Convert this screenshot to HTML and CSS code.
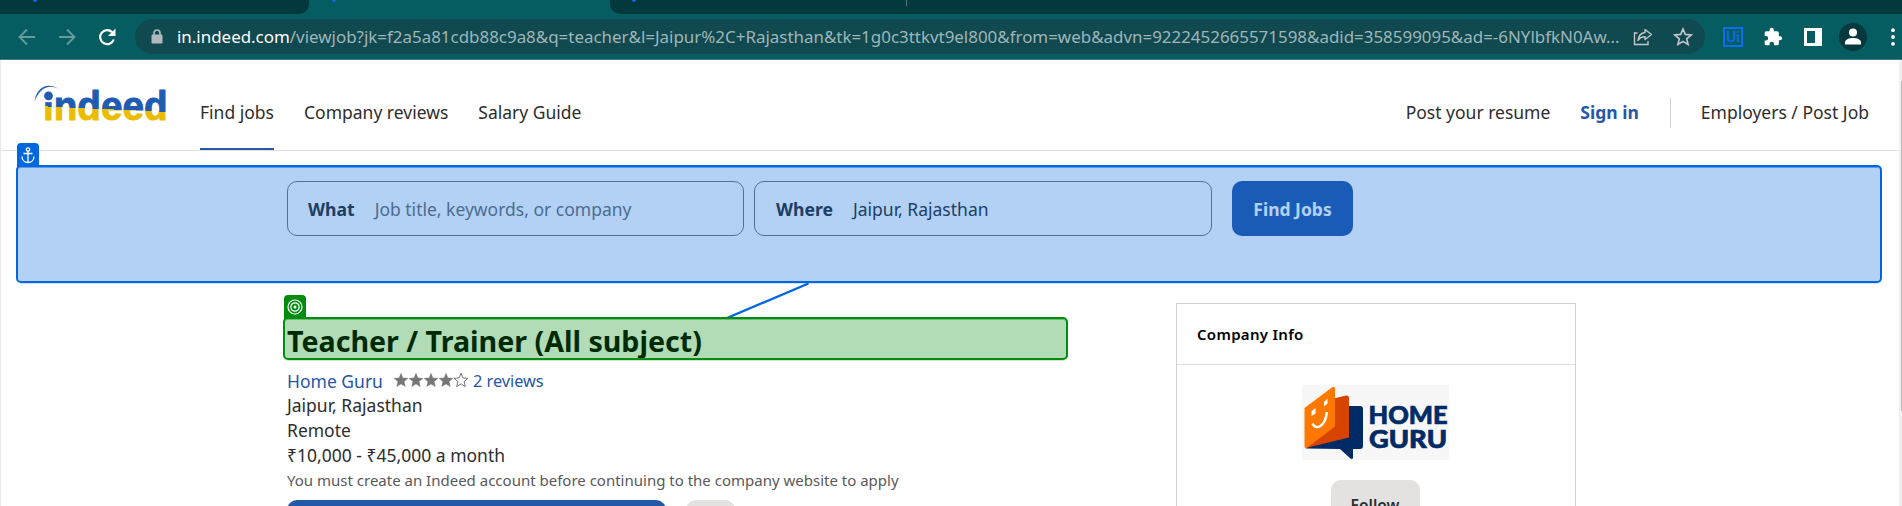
FILE: index.html
```html
<!DOCTYPE html>
<html lang="en">
<head>
<meta charset="utf-8">
<title>Teacher / Trainer (All subject)</title>
<link rel="stylesheet" href="styles.css">
</head>
<body>
<div class="chrome">
  <div class="tabstrip">
    <div class="tab tab-left"><i class="speck"></i></div>
    <div class="tab-active"><i class="speck"></i></div>
    <div class="tab tab-rest"><i class="speck"></i><i class="tab-sep"></i></div>
  </div>
  <div class="toolbar">
    <svg class="nav-ico" width="18" height="18" viewBox="0 0 18 18"><path d="M17 9H2M9 1.500L1.500 9L9 16.500" fill="none" stroke="#679b9e" stroke-width="1.800"/></svg>
    <svg class="nav-ico" width="18" height="18" viewBox="0 0 18 18"><path d="M1 9h15M9 1.500L16.500 9L9 16.500" fill="none" stroke="#679b9e" stroke-width="1.800"/></svg>
    <svg class="nav-ico" width="18" height="18" viewBox="0 0 18 18"><path d="M15.800 11.500A7 7 0 1 1 14.200 4.200" fill="none" stroke="#fff" stroke-width="2.200"/><path d="M17.500 0.500V8H10z" fill="#fff"/></svg>
    <div class="omnibox">
      <svg class="lock" width="12" height="15" viewBox="0 0 12 15"><path d="M3 6V4a3 3 0 0 1 6 0v2" fill="none" stroke="#b1b9bd" stroke-width="1.700"/><rect x="0.500" y="5.500" width="11" height="9" rx="1.200" fill="#b1b9bd"/></svg>
      <div class="url"><span class="host">in.indeed.com</span><span class="path">/viewjob?jk=f2a5a81cdb88c9a8&amp;q=teacher&amp;l=Jaipur%2C+Rajasthan&amp;tk=1g0c3ttkvt9el800&amp;from=web&amp;advn=9222452665571598&amp;adid=358599095&amp;ad=-6NYlbfkN0Aw...</span></div>
      <svg class="share" width="20" height="18" viewBox="0 0 20 18"><path d="M4.500 5H1.500V16.500H15V13" fill="none" stroke="#c1c7c9" stroke-width="1.400"/><path d="M12 1.500L18.500 6.500L12 11.500V8.700C8.500 8.700 6.500 10 5 12.500C5.500 8 8 5 12 4.500z" fill="none" stroke="#c1c7c9" stroke-width="1.400" stroke-linejoin="round"/></svg>
      <svg class="star" width="20" height="19" viewBox="0 0 20 19"><path d="M10 2l2.300 5.400 5.900.5-4.500 3.900 1.400 5.700L10 14.400l-5.100 3.100 1.400-5.700L1.800 7.900l5.900-.5z" fill="none" stroke="#c1c7c9" stroke-width="1.600"/></svg>
    </div>
    <div class="ext-ui">Ui</div>
    <svg class="puzzle" width="20" height="20" viewBox="0 0 24 24"><path fill="#fff" d="M20.500 11H19V7c0-1.100-.9-2-2-2h-4V3.500a2.500 2.500 0 0 0-5 0V5H4c-1.100 0-2 .9-2 2v3.800h1.500a2.700 2.700 0 0 1 0 5.400H2V20c0 1.100.9 2 2 2h3.800v-1.500a2.700 2.700 0 0 1 5.400 0V22H17c1.100 0 2-.9 2-2v-4h1.500a2.500 2.500 0 0 0 0-5z"/></svg>
    <div class="panel"></div>
    <svg class="avatar" width="28" height="28" viewBox="0 0 28 28"><circle cx="14" cy="14" r="14" fill="#05393d"/><circle cx="14" cy="9.500" r="4" fill="#fff"/><path d="M6 21.500v-2.300c0-2.700 4.500-4.200 8-4.200s8 1.500 8 4.200v2.300z" fill="#fff"/></svg>
    <svg class="dots" width="4" height="18" viewBox="0 0 4 18"><circle cx="2" cy="2.200" r="1.900" fill="#fff"/><circle cx="2" cy="9" r="1.900" fill="#fff"/><circle cx="2" cy="15.800" r="1.900" fill="#fff"/></svg>
  </div>
</div>

<div class="page">
  <header class="site-header">
    <svg class="logo" width="136" height="44" viewBox="32 82 136 44">
      <defs><linearGradient id="flag" gradientUnits="userSpaceOnUse" x1="104" y1="98" x2="103" y2="120"><stop offset=".5" stop-color="#205bb2"/><stop offset=".5" stop-color="#eabc04"/></linearGradient></defs>
      <text class="logo-text" x="43" y="119.800" textLength="124.500" lengthAdjust="spacingAndGlyphs" fill="url(#flag)" stroke="url(#flag)">indeed</text>
      <path d="M42 86H55V101.500Q49 103 42 101.500z" fill="#fff"/>
      <circle cx="48.500" cy="95.800" r="4.400" fill="#205bb2"/>
      <path d="M34.500 101.500C36 90 45 80.500 59 89C48 83.500 40 88 34.500 101.500z" fill="#205bb2"/>
    </svg>
    <nav class="main-nav">
      <a class="active">Find jobs</a><a>Company reviews</a><a>Salary Guide</a>
    </nav>
    <nav class="side-nav"><a>Post your resume</a><a class="signin">Sign in</a><span class="rule"></span><a>Employers / Post Job</a></nav>
  </header>

  <section class="search">
    <div class="field"><b>What</b><span class="hint">Job title, keywords, or company</span></div>
    <div class="field where"><b>Where</b><span>Jaipur, Rajasthan</span></div>
    <div class="find">Find Jobs</div>
    <div class="mark mark-blue"><div class="flag">
      <svg width="14" height="17" viewBox="0 0 14 17"><g fill="none" stroke="#fff" stroke-width="1.300"><circle cx="7" cy="2.500" r="1.700"/><path d="M7 4.200V15.500M2.500 6.500h9M1 9.500C1 13 3.500 15.500 7 15.500S13 13 13 9.500"/></g></svg>
    </div></div>
    <svg class="link-line" width="84" height="36" viewBox="0 0 84 36"><path d="M81.500 0.500L0 35" stroke="#0067df" stroke-width="2.300"/></svg>
  </section>

  <main class="content">
    <article class="job">
      <h1>Teacher / Trainer (All subject)</h1>
      <div class="mark mark-green"><div class="flag">
        <svg width="16" height="16" viewBox="0 0 16 16"><g fill="none" stroke="#fff" stroke-width="1.200"><circle cx="8" cy="8" r="7"/><circle cx="8" cy="8" r="4.200"/></g><circle cx="8" cy="8" r="1.500" fill="#fff"/></svg>
      </div></div>
      <div class="line company"><a>Home Guru</a>
        <svg class="stars" width="75" height="15" viewBox="0 0 75 15"><defs><path id="s" d="M7 .2l1.900 4.700 5.100.4-3.900 3.300 1.200 5L7 10.900l-4.300 2.700 1.200-5L0 5.300l5.100-.4z"/></defs><g fill="#767676" stroke="#767676" stroke-width=".4"><use href="#s"/><use href="#s" x="15"/><use href="#s" x="30"/><use href="#s" x="45"/></g><use href="#s" x="60" fill="none" stroke="#767676"/></svg>
        <a class="reviews">2 reviews</a></div>
      <div class="line">Jaipur, Rajasthan</div>
      <div class="line">Remote</div>
      <div class="line salary">₹10,000 - ₹45,000 a month</div>
      <div class="line note">You must create an Indeed account before continuing to the company website to apply</div>
      <div class="actions"><div class="apply"></div><div class="save"></div></div>
    </article>
    <aside class="card">
      <h2>Company Info</h2>
      <div class="card-body">
        <svg class="guru" width="147" height="75" viewBox="0 0 147 75">
          <rect width="147" height="75" fill="#f7f7f7"/>
          <path d="M4 63.500L46 21H58Q61 21 61 24V61Q61 64 58 64H51V73.500L49 74L38 64z" fill="#002b66"/>
          <path d="M4 63L32 13.500L44 10.500Q47 10 47 13V52.500z" fill="#d64400"/>
          <path d="M2.500 23L30.500 2Q33 1 33 4V41.500L4 63.500Q2.500 63.500 2.500 61z" fill="#ff7900"/>
          <path d="M9.500 26L13.500 23V28.500L9.500 31zM22 17L25.500 13.500V18.500L22 21.500z" fill="#fff"/>
          <path d="M10.500 38.500Q13 44 18.500 41Q24 37 24.800 27" fill="none" stroke="#fff" stroke-width="2.500"/>
          <text class="guru-text" x="66.500" y="39" textLength="79" lengthAdjust="spacingAndGlyphs">HOME</text>
          <text class="guru-text" x="67" y="63" textLength="78" lengthAdjust="spacingAndGlyphs">GURU</text>
        </svg>
        <div class="follow">Follow</div>
      </div>
    </aside>
  </main>
  <div class="scrollbar"><div class="thumb"></div></div>
</div>
</body>
</html>
```

FILE: styles.css
```css
* { box-sizing: border-box; }
html, body { height: 506px; overflow: hidden; }
body { margin: 0; background: #fff; color: #2d2d2d; font-family: "Noto Sans", sans-serif; font-size: 17.500px; }
svg { display: block; flex: none; }

.chrome { height: 60px; background: #055d62; border-bottom: 1px solid #3b7f84; }
.tabstrip { display: flex; height: 14px; }
.tab { background: #03393d; }
.tab-left { width: 309px; padding-left: 33px; border-radius: 0 0 10px 0; }
.tab-active { width: 301px; padding-left: 23px; }
.tab-rest { flex: 1; display: flex; padding-left: 22px; border-radius: 0 0 0 10px; }
.speck { display: block; width: 4px; height: 2px; border-radius: 0 0 2px 2px; background: #1664f0; }
.tab-sep { width: 1px; height: 6px; margin-left: 270px; background: #527a7d; }
.toolbar { display: flex; align-items: center; height: 45px; padding: 0 7px 0 18px; }
.nav-ico { flex: none; margin-right: 22px; }
.nav-ico:nth-child(3) { margin-right: 19px; }
.omnibox { display: flex; flex: none; align-items: center; width: 1570px; height: 35px; padding-left: 16px; border-radius: 18px; background: #10494f; }
.url { flex: none; width: 1456px; margin-left: 14px; white-space: nowrap; font-size: 16.930px; line-height: 24px; color: #9fb6b9; }
.host { color: #fff; }
.star { margin-left: 20px; }
.ext-ui { display: flex; flex: none; align-items: center; justify-content: center; width: 20px; height: 20px; margin-left: 18px; border: 2px solid #0b6df0; color: #0b6df0; font: 500 15px/16px Roboto, sans-serif; }
.puzzle { margin-left: 20px; }
.panel { flex: none; width: 18px; height: 18px; margin-left: 21px; border: 3px solid #fff; border-right-width: 7px; }
.avatar { margin-left: 17px; }
.dots { margin-left: auto; }

.page { position: relative; height: 446px; border-left: 1px solid #e8eaea; overflow: hidden; }
.site-header { display: flex; height: 91px; margin-right: 3px; padding-left: 31px; border-bottom: 1px solid #e0e0e0; }
.logo { margin-top: 22px; }
.logo-text { font: bold 41px "Liberation Sans", sans-serif; stroke-width: 1px; stroke-linejoin: round; }
.main-nav { display: flex; gap: 30px; margin-left: 32px; }
.main-nav a { height: 90px; line-height: 104px; }
.main-nav .active { border-bottom: 2px solid #2557a7; }
.side-nav { display: flex; margin-left: auto; padding-right: 30px; line-height: 104px; }
.signin { margin-left: 30px; color: #2557a7; font-weight: 700; }
.rule { width: 1px; height: 30px; margin: 38px 30px 0 31px; background: #d4d2d0; }

.search { position: relative; display: flex; height: 152px; padding: 30px 0 0 286px; }
.field { display: flex; align-items: center; gap: 20px; width: 457px; height: 55px; padding-left: 20px; border: 1px solid #767676; border-radius: 10px; }
.field b { font-size: 17.600px; }
.where { width: 458px; margin-left: 10px; padding-left: 21px; }
.hint { color: #6f6f6f; }
.find { width: 121px; height: 55px; margin-left: 20px; border-radius: 10px; background: #2557a7; color: #fff; font-weight: 700; line-height: 57px; text-align: center; }
.mark { position: absolute; border: 2px solid; border-radius: 5px; }
.flag { position: absolute; display: flex; align-items: center; justify-content: center; width: 22px; height: 24px; left: -1px; bottom: 100%; border-radius: 4px 4px 0 0; }
.mark-blue { left: 15px; top: 14px; width: 1866px; height: 118px; border-color: #0067df; background: rgba(0, 103, 223, .3); background-clip: padding-box; box-shadow: inset 0 1px 0 rgba(0, 103, 223, .5), 0 1px 0 rgba(0, 103, 223, .2); }
.mark-blue .flag { background: #0067df; }
.link-line { position: absolute; left: 726px; top: 132px; }

.content { display: flex; align-items: flex-start; padding-left: 286px; }
.job { position: relative; width: 780px; padding-top: 15px; }
h1 { margin: 0; height: 50px; font-size: 28.600px; line-height: 45px; white-space: nowrap; color: #000; }
.mark-green { left: -4px; top: 14px; width: 785px; height: 43px; border-color: #008c0e; background: rgba(0, 140, 14, .3); background-clip: padding-box; box-shadow: inset 0 1px 0 rgba(0, 140, 14, .4), 0 1px 0 rgba(0, 140, 14, .2); }
.mark-green .flag { background: #008c0e; }
.line { height: 25px; line-height: 24px; white-space: nowrap; }
.company { display: flex; align-items: center; color: #2557a7; }
.reviews { font-size: 16.300px; }
.stars { margin: 0 4px 0 11px; }
.note { color: #595959; font-size: 15px; }
.actions { display: flex; gap: 20px; margin-top: 7px; }
.apply { width: 379px; height: 50px; border-radius: 10px; background: #2557a7; }
.save { width: 49px; height: 50px; border-radius: 10px; background: #e4e2e0; }
.card { width: 400px; height: 260px; margin: 0 0 0 109px; border: 1px solid #d0d0d0; }
h2 { margin: 0; height: 61px; padding-left: 20px; border-bottom: 1px solid #e0e0e0; color: #000; font-size: 15px; font-weight: 600; letter-spacing: .3px; line-height: 61px; }
.card-body { display: flex; flex-direction: column; align-items: center; gap: 20px; padding: 20px 2px 0 0; }
.guru-text { fill: #002b66; stroke: #002b66; stroke-width: .7px; font: 900 25px Lato, sans-serif; }
.follow { width: 89px; height: 50px; border-radius: 10px; background: #e4e2e0; font-size: 15.500px; font-weight: 600; line-height: 51px; text-align: center; }
.scrollbar { position: absolute; top: 0; right: 0; width: 3px; height: 446px; padding: 21px 0 0 2px; background: #f0f0f0; }
.thumb { height: 330px; background: #bdbdbd; }
```
